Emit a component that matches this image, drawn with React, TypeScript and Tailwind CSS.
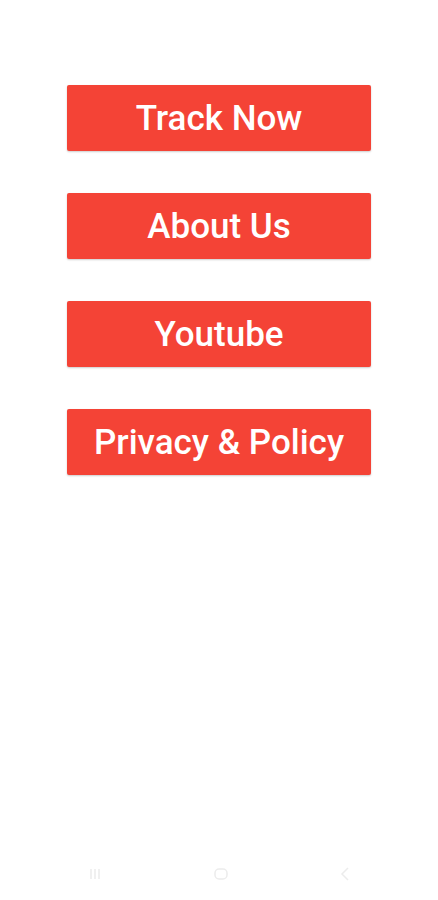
const items = ["Track Now", "About Us", "Youtube", "Privacy & Policy"];

export default function App() {
  return (
    <div className="w-[438px] h-[900px] bg-white flex flex-col font-['Roboto',sans-serif]">
      <div className="flex flex-col gap-[42px] pt-[85px] pl-[67px]">
        {items.map((label) => (
          <button
            key={label}
            className="w-[304px] h-[66px] rounded-[2px] bg-[#f44336] text-white text-[35px] font-medium leading-none shadow-[0_1px_2px_rgba(0,0,0,0.2)] flex items-center justify-center"
          >
            {label}
          </button>
        ))}
      </div>
      <div className="mt-auto h-[44px] mb-[4px] flex items-center justify-between px-[88px] text-[#ececec]">
        <svg width="14" height="14" viewBox="0 0 14 14" fill="none" stroke="currentColor" strokeWidth="1.5">
          <path d="M3 2v10M7 2v10M11 2v10" />
        </svg>
        <svg width="16" height="14" viewBox="0 0 16 14" fill="none" stroke="currentColor" strokeWidth="1.5">
          <rect x="2" y="2" width="12" height="10" rx="4" />
        </svg>
        <svg width="10" height="14" viewBox="0 0 10 14" fill="none" stroke="currentColor" strokeWidth="1.5">
          <path d="M8 1L2 7l6 6" />
        </svg>
      </div>
    </div>
  );
}
